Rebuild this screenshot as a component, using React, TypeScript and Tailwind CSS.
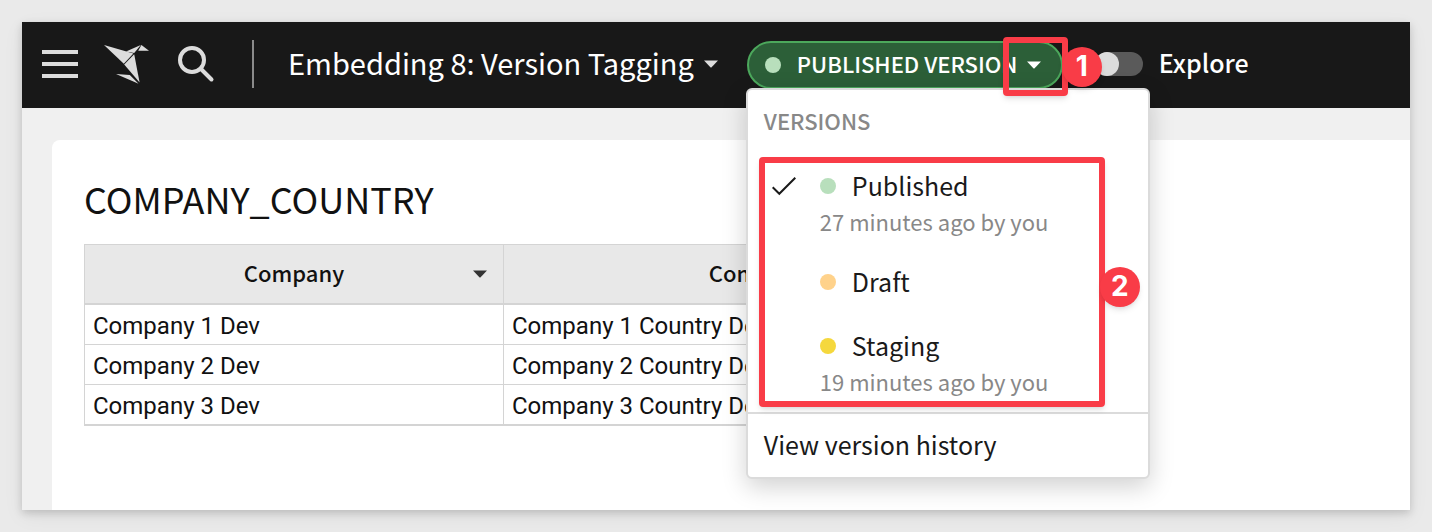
import type { ReactNode } from 'react';

const versions = [
  { name: 'Published', note: '27 minutes ago by you', dot: 'bg-[#b8dfbc]', current: true },
  { name: 'Draft', note: '', dot: 'bg-[#ffd28b]', current: false },
  { name: 'Staging', note: '19 minutes ago by you', dot: 'bg-[#f5d83d]', current: false },
];

const rows = [1, 2, 3];

function Caret({ className }: { className: string }) {
  return (
    <svg viewBox="0 0 14 8" className={`h-2 w-3.5 shrink-0 ${className}`} aria-hidden="true">
      <path d="M0 .5h14L7.6 7.2a.9.9 0 0 1-1.2 0Z" fill="currentColor" />
    </svg>
  );
}

function Marker({ className, children }: { className: string; children: ReactNode }) {
  return (
    <span
      className={`absolute flex size-10 items-center justify-center rounded-full bg-[#f93c47] pb-0.5 font-[Inter,sans-serif] text-[28px] leading-none font-bold text-white shadow-md ${className}`}
    >
      {children}
    </span>
  );
}

function VersionMenu() {
  return (
    <div className="absolute top-full -left-px z-10 -mt-px w-[404px] rounded-md border-2 border-[#dbdbdb] bg-white text-[#1a1a1a] shadow-[0_8px_24px_rgba(0,0,0,0.18)]">
      <h2 className="px-4 pt-3.5 pb-[18px] text-[22px] leading-8 font-medium text-[#888]">VERSIONS</h2>
      <ul className="pb-0.5">
        {versions.map((v) => (
          <li key={v.name}>
            <button type="button" className="flex w-full items-start px-4 pt-4 text-left">
              <span className="flex h-8 w-14 shrink-0 items-center pl-2">
                {v.current && (
                  <svg viewBox="0 0 24 20" className="h-5 w-6" fill="none" stroke="currentColor" strokeWidth="2" aria-hidden="true">
                    <path d="M.7 11.2 7.3 17.8 23.3 1.8" />
                  </svg>
                )}
              </span>
              <span className={v.note ? 'pb-2.5' : 'pb-4'}>
                <span className="flex h-8 items-center gap-4 text-[25px] leading-8">
                  <span className={`size-4 rounded-full ${v.dot}`} />
                  <span className="pb-0.5">{v.name}</span>
                </span>
                {v.note && <span className="block text-[22px] leading-[38px] text-[#888]">{v.note}</span>}
              </span>
            </button>
          </li>
        ))}
      </ul>
      <a href="#history" className="block border-t-2 border-[#dbdbdb] px-4 pt-3.5 pb-[17px] text-[25px] leading-8">
        View version history
      </a>
      <span className="pointer-events-none absolute top-[67px] left-[11px] h-[250px] w-[346px] rounded-sm border-6 border-[#f93c47] shadow-md" />
      <Marker className="top-[177px] left-[352px]">2</Marker>
    </div>
  );
}

export default function App() {
  return (
    <div className="flex min-h-screen flex-col bg-[#eaeaea] p-[22px] font-['Noto_Sans_CJK_SC',sans-serif]">
      <div className="flex grow flex-col bg-[#f0f0f0] shadow-[0_3px_8px_rgba(0,0,0,0.16),0_6px_20px_rgba(0,0,0,0.06)]">
        <header className="flex h-[86px] items-center bg-[#181818] px-5 pb-0.5 text-white">
          <button type="button" aria-label="Menu" className="flex w-9 flex-col gap-2">
            <span className="h-1 bg-[#dcdcdc]" />
            <span className="h-1 bg-[#dcdcdc]" />
            <span className="h-1 bg-[#dcdcdc]" />
          </button>
          <a href="#home" aria-label="Home" className="ml-[26px]">
            <svg viewBox="104 45 45 39" className="h-[39px] w-[45px]" fill="#dcdcdc" aria-hidden="true">
              <path d="M104 45 133.4 53.4 123.8 63.8Z" />
              <path d="M126 51.4 140.8 45 134.2 53Z" />
              <path d="M141.4 45 149 50.8H138.2Z" />
              <path d="M124.2 64.6 134.2 54.2 139.6 82.4Z" />
              <path d="M116 74 129.8 75 138.6 83.8Z" />
            </svg>
          </a>
          <button type="button" aria-label="Search" className="ml-7">
            <svg viewBox="0 0 38 38" className="size-[38px]" fill="none" stroke="#dcdcdc" strokeWidth="4" aria-hidden="true">
              <circle cx="15" cy="15" r="12" />
              <path d="m24 24 10.5 10.5" strokeLinecap="round" />
            </svg>
          </button>
          <span className="mr-[34px] ml-[37px] h-12 w-0.5 bg-[#8a8a8a]" />
          <button type="button" className="flex items-center gap-2.5 text-[29px] leading-10 whitespace-nowrap">
            <span className="pb-1">Embedding 8: Version Tagging</span>
            <Caret className="text-[#dcdcdc]" />
          </button>
          <div className="relative mt-0.5 ml-[29px]">
            <button
              type="button"
              className="flex h-12 w-[316px] items-center rounded-full border-2 border-[#4ca85c] bg-[#2c5f38] pl-4 text-[22px] leading-8 font-medium whitespace-nowrap"
            >
              <span className="mr-4 size-4 rounded-full bg-[#b8dfbc]" />
              <span className="pb-1">PUBLISHED VERSION</span>
              <Caret className="ml-2.5" />
            </button>
            <VersionMenu />
            <span className="pointer-events-none absolute -top-1 left-64 z-10 h-[59px] w-[65px] rounded-sm border-6 border-[#f93c47] shadow-md" />
            <Marker className="top-1.5 left-[315px] z-10">1</Marker>
          </div>
          <label className="ml-8 flex items-center gap-4 text-[25px] leading-8 font-medium">
            <input
              type="checkbox"
              role="switch"
              className="h-6 w-12 appearance-none rounded-full bg-[#5a5a5a] before:block before:size-6 before:rounded-full before:bg-[#dcdcdc]"
            />
            <span className="pb-1">Explore</span>
          </label>
        </header>
        <main className="mt-8 ml-[30px] grow rounded-tl-lg bg-white px-8 pt-8 text-[#111]">
          <h1 className="text-[36px] leading-[52px]">COMPANY_COUNTRY</h1>
          <table className="mt-5 border-separate border-spacing-0 border-t border-b border-l border-[#d4d4d4]">
            <thead>
              <tr className="h-[60px] bg-[#e8e8e8] text-[22px] leading-8">
                <th className="relative w-[419px] border-r border-b-2 border-[#d4d4d4] pb-1 font-medium">
                  Company
                  <span className="absolute inset-y-0 right-4 flex items-center">
                    <Caret className="text-[#333]" />
                  </span>
                </th>
                <th className="w-[601px] border-r border-b-2 border-[#d4d4d4] pb-1 font-medium">Company Country</th>
              </tr>
            </thead>
            <tbody className="font-[Roboto,sans-serif] text-[24px] leading-8">
              {rows.map((n) => (
                <tr key={n} className="h-10">
                  <td className="border-r border-b border-[#d4d4d4] px-2 pt-0.5">Company {n} Dev</td>
                  <td className="border-r border-b border-[#d4d4d4] px-2 pt-0.5">Company {n} Country Dev</td>
                </tr>
              ))}
            </tbody>
          </table>
        </main>
      </div>
    </div>
  );
}
